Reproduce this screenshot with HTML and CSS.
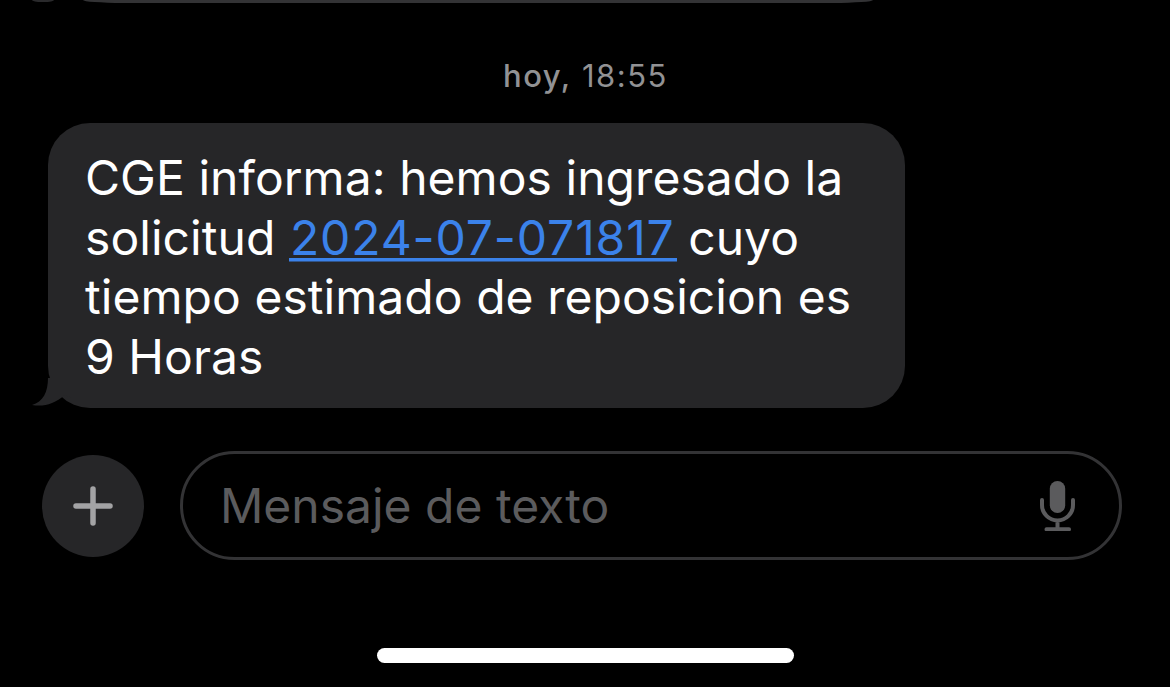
FILE: index.html

```html
<!DOCTYPE html>
<html lang="es">
<head>
  <meta charset="UTF-8" />
  <meta name="viewport" content="width=device-width, initial-scale=1.0" />
  <title>Mensajes</title>
  <link rel="stylesheet" href="styles.css">
</head>
<body>
  <div class="prev-bubble"></div>

  <p class="timestamp"><strong>hoy,</strong> 18:55</p>

  <div class="bubble">
    <svg class="tail" viewBox="0 0 40 30" width="40" height="30">
      <path d="M16 0 C16 14 11 24 0 27 C12 29 22 26 33 17 L40 20 L40 0 Z" />
    </svg>
    <p>CGE informa: hemos ingresado la<br>solicitud <a href="#">2024-07-071817</a> cuyo<br>tiempo estimado de reposicion es<br>9 Horas</p>
  </div>

  <div class="composer">
    <button class="add-btn" aria-label="Añadir">
      <svg viewBox="0 0 40 40" width="40" height="40">
        <path d="M20 3 V37 M3 20 H37" />
      </svg>
    </button>
    <div class="input-box">
      <span class="placeholder">Mensaje de texto</span>
      <svg class="mic" viewBox="0 0 35 50" width="35" height="50">
        <rect x="9.8" y="0" width="15.4" height="32" rx="7.7" class="mic-fill" />
        <path d="M2 19 V24 A15.5 15.5 0 0 0 33 24 V19 M17.5 40 V48 M6.5 48.2 H29" class="mic-line" />
      </svg>
    </div>
  </div>

  <div class="home-bar"></div>
</body>
</html>
```

FILE: styles.css

```css
html, body {
  height: 100%;
}
body {
  margin: 0;
  background: #000;
  color: #fff;
  font-family: Inter, 'Liberation Sans', sans-serif;
  overflow: hidden;
}
.prev-bubble {
  position: relative;
  width: 790px;
  height: 3px;
  margin-left: 83px;
  background: #333335;
  border-radius: 0 0 40px 40px / 0 0 3px 3px;
}
.prev-bubble::before {
  content: "";
  position: absolute;
  top: 0;
  left: -51px;
  width: 22px;
  height: 2px;
  background: #2a2a2c;
  border-radius: 0 0 10px 10px / 0 0 2px 2px;
}
.timestamp {
  margin: 54px 0 0;
  padding-left: 503px;
  height: 66px;
  line-height: 38px;
  font-size: 31px;
  letter-spacing: 1.5px;
  color: #929294;
}
.timestamp strong {
  font-weight: 500;
}
.bubble {
  position: relative;
  width: 857px;
  height: 285px;
  margin-left: 48px;
  background: #262628;
  border-radius: 42px;
  box-sizing: border-box;
  padding: 25px 0 0 37px;
}
.bubble p {
  margin: 0;
  font-size: 48px;
  line-height: 59.7px;
  letter-spacing: 0.05px;
  white-space: nowrap;
}
.bubble a {
  color: #3b82ea;
  text-decoration: none;
  letter-spacing: 0.9px;
  padding: 0 2px 0 1px;
  margin-right: -2px;
  background: linear-gradient(#3b82ea, #3b82ea) no-repeat 0 calc(100% - 5px) / 100% 3.5px;
}
.tail {
  position: absolute;
  left: -16px;
  bottom: 0;
  fill: #262628;
}
.composer {
  display: flex;
  align-items: center;
  gap: 36px;
  margin: 43px 0 0 42px;
}
.add-btn {
  width: 102px;
  height: 102px;
  padding: 0;
  border: none;
  border-radius: 50%;
  background: #262628;
  display: flex;
  align-items: center;
  justify-content: center;
}
.add-btn path {
  fill: none;
  stroke: #a3a3a5;
  stroke-width: 5.5;
  stroke-linecap: round;
}
.input-box {
  width: 942px;
  height: 109px;
  box-sizing: border-box;
  border: 3px solid #333335;
  border-radius: 55px;
  display: flex;
  align-items: center;
  justify-content: space-between;
  padding: 0 44px 0 37px;
}
.placeholder {
  font-size: 48px;
  color: #5b5b5d;
}
.mic {
  display: block;
}
.mic-fill {
  fill: #5b5b5d;
}
.mic-line {
  fill: none;
  stroke: #5b5b5d;
  stroke-width: 4;
  stroke-linecap: round;
}
.home-bar {
  width: 417px;
  height: 15px;
  margin: 88px 0 0 377px;
  background: #fff;
  border-radius: 8px;
}
```
